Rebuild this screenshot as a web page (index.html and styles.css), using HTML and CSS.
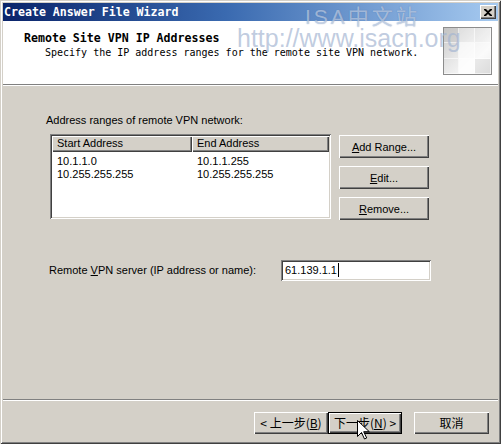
FILE: index.html
```html
<!DOCTYPE html>
<html>
<head>
<meta charset="utf-8">
<title>Create Answer File Wizard</title>
<link rel="stylesheet" href="styles.css">
</head>
<body>
<div class="window">
  <div class="titlebar">
    <span class="title-text">Create Answer File Wizard</span>
    <button class="close-btn" aria-label="Close">
      <svg width="8" height="7" viewBox="0 0 8 7"><path d="M0 0h2l2 2 2-2h2v1L5 3.5 8 6v1H6L4 5 2 7H0V6l3-2.5L0 1z" fill="#000"/></svg>
    </button>
  </div>

  <div class="header">
    <div class="header-text">
      <div class="header-title">Remote Site VPN IP Addresses</div>
      <div class="header-sub">Specify the IP address ranges for the remote site VPN network.</div>
    </div>
    <div class="header-art">
      <div class="art-cell a1"></div><div class="art-cell a2"></div><div class="art-cell a3"></div>
      <div class="art-cell a4"></div><div class="art-cell a5"></div><div class="art-cell a6"></div>
      <div class="art-cell a7"></div><div class="art-cell a8"></div><div class="art-cell a9"></div>
    </div>
  </div>

  <div class="etched"></div>

  <div class="body">
    <div class="label">Address ranges of remote VPN network:</div>
    <div class="range-row">
      <div class="listview">
        <div class="lv-head">
          <div class="lv-col c1">Start Address</div>
          <div class="lv-col c2">End Address</div>
        </div>
        <div class="lv-rows">
          <div class="lv-row"><span class="c1">10.1.1.0</span><span class="c2">10.1.1.255</span></div>
          <div class="lv-row"><span class="c1">10.255.255.255</span><span class="c2">10.255.255.255</span></div>
        </div>
      </div>
      <div class="side-buttons">
        <button class="btn side"><u>A</u>dd Range...</button>
        <button class="btn side"><u>E</u>dit...</button>
        <button class="btn side"><u>R</u>emove...</button>
      </div>
    </div>

    <div class="server-row">
      <label class="server-label">Remote <u>V</u>PN server (IP address or name):</label>
      <div class="textbox">61.139.1.1<span class="caret"></span></div>
    </div>
  </div>

  <div class="etched"></div>

  <div class="footer">
    <button class="btn nav">&lt;&nbsp;上一步(<u>B</u>)</button>
    <button class="btn nav default">下一步(<u>N</u>)&nbsp;&gt;</button>
    <button class="btn nav cancel">取消</button>
  </div>

  <!-- site watermark stamped over the dialog -->
  <span class="brand-mark">ISA中文站</span>
  <span class="brand-url">http://www.isacn.org</span>

  <svg class="pointer" width="13" height="20" viewBox="0 0 13 20">
    <path d="M0.5 0.5v16l4-4 3 6.5 2.2-1-3-6.3h5.6z" fill="#fff" stroke="#000" stroke-width="1"/>
  </svg>
</div>
</body>
</html>
```

FILE: styles.css
```css
* { box-sizing: border-box; }

html, body {
  margin: 0;
  padding: 0;
  background: #d4d0c8;
}

body {
  font-family: "Liberation Sans", Arial, sans-serif;
  font-size: 11px;
  color: #000;
}

u { text-decoration: underline; text-underline-offset: 1px; }

.window {
  position: relative;
  width: 501px;
  height: 444px;
  background: #d4d0c8;
  display: flex;
  flex-direction: column;
  padding: 3px;
  box-shadow:
    inset 1px 1px 0 #d4d0c8,
    inset -1px -1px 0 #404040,
    inset 2px 2px 0 #ffffff,
    inset -2px -2px 0 #808080;
}

/* caption */
.titlebar {
  height: 18px;
  flex: none;
  display: flex;
  align-items: center;
  padding: 0 2px 0 1px;
  background: linear-gradient(to right, #0a246a 0%, #3a6ab0 45%, #a6caf0 100%);
}

.title-text {
  font-family: "DejaVu Sans Mono", "Liberation Mono", monospace;
  font-weight: bold;
  font-size: 11.6px;
  color: #fff;
  flex: 1;
  white-space: nowrap;
}

.close-btn {
  width: 16px;
  height: 14px;
  padding: 0;
  margin: 0;
  border: none;
  background: #d4d0c8;
  display: flex;
  align-items: center;
  justify-content: center;
  box-shadow:
    inset 1px 1px 0 #ffffff,
    inset -1px -1px 0 #404040,
    inset -2px -2px 0 #808080;
}

/* wizard header */
.header {
  height: 63px;
  flex: none;
  background: #fff;
  display: flex;
  justify-content: space-between;
  padding: 10px 5px 0 21px;
}

.header-title {
  font-family: "DejaVu Sans Mono", "Liberation Mono", monospace;
  font-weight: bold;
  font-size: 11.6px;
  line-height: 14px;
}

.header-sub {
  font-family: "DejaVu Sans Mono", "Liberation Mono", monospace;
  font-size: 10px;
  line-height: 12px;
  margin-top: 2px;
  padding-left: 21px;
}

.header-art {
  width: 49px;
  height: 48px;
  margin-top: -4px;
  margin-right: 1px;
  border: 1px solid #8c8c8c;
  display: grid;
  grid-template-columns: 15px 16px 16px;
  grid-template-rows: 15px 16px 15px;
  background: linear-gradient(135deg, #c8c8c8 0%, #e8e8e8 45%, #f6f6f6 70%, #dcdcdc 100%);
}

.art-cell { border-right: 1px solid rgba(255,255,255,0.6); border-bottom: 1px solid rgba(255,255,255,0.6); }
.a1 { background: rgba(190,190,190,0.35); }
.a2 { background: rgba(255,255,255,0.25); }
.a3 { background: rgba(255,255,255,0.15); }
.a5 { background: rgba(255,255,255,0.7); }
.a6 { background: rgba(255,255,255,0.5); }
.a8 { background: rgba(255,255,255,0.8); }
.a9 { background: rgba(220,220,220,0.5); }

/* etched separator */
.etched {
  flex: none;
  height: 2px;
  border-top: 1px solid #808080;
  border-bottom: 1px solid #ffffff;
}

/* page body */
.body {
  flex: 1;
  padding: 28px 0 0 43px;
}

.label {
  line-height: 13px;
}

.range-row {
  display: flex;
  gap: 8px;
  margin-top: 7px;
  margin-left: 4px;
}

.listview {
  width: 281px;
  height: 85px;
  background: #fff;
  padding: 2px;
  box-shadow:
    inset 1px 1px 0 #808080,
    inset -1px -1px 0 #ffffff,
    inset 2px 2px 0 #404040,
    inset -2px -2px 0 #d4d0c8;
}

.lv-head {
  display: flex;
  height: 16px;
}

.lv-col {
  background: #d4d0c8;
  line-height: 15px;
  padding-left: 5px;
  box-shadow:
    inset 1px 1px 0 #ffffff,
    inset -1px -1px 0 #404040,
    inset -2px -2px 0 #808080;
}

.lv-col.c1 { width: 140px; }
.lv-col.c2 { width: 137px; }

.lv-rows { padding-top: 3px; }

.lv-row {
  display: flex;
  line-height: 13px;
}

.lv-row .c1 { width: 140px; padding-left: 5px; }
.lv-row .c2 { padding-left: 5px; }

.side-buttons {
  display: flex;
  flex-direction: column;
  gap: 8px;
  padding-top: 1px;
}

.btn {
  font-family: "Liberation Sans", Arial, sans-serif;
  font-size: 11px;
  color: #000;
  background: #d4d0c8;
  border: none;
  padding: 0;
  margin: 0;
  box-shadow:
    inset 1px 1px 0 #ffffff,
    inset -1px -1px 0 #404040,
    inset -2px -2px 0 #808080;
}

.btn.side {
  width: 90px;
  height: 23px;
}

.server-row {
  display: flex;
  align-items: center;
  margin-top: 40px;
  margin-left: 3px;
}

.server-label {
  width: 232px;
  line-height: 13px;
}

.textbox {
  width: 150px;
  height: 21px;
  background: #fff;
  padding: 4px 0 0 4px;
  line-height: 13px;
  display: flex;
  align-items: flex-start;
  box-shadow:
    inset 1px 1px 0 #808080,
    inset -1px -1px 0 #ffffff,
    inset 2px 2px 0 #404040,
    inset -2px -2px 0 #d4d0c8;
}

.caret {
  display: inline-block;
  width: 1px;
  height: 14px;
  margin-left: 1px;
  margin-top: -1px;
  background: #000;
}

/* navigation buttons */
.footer {
  height: 40px;
  flex: none;
  display: flex;
  justify-content: flex-end;
  align-items: flex-start;
  padding: 11px 9px 0 0;
}

.btn.nav {
  width: 74px;
  height: 22px;
  font-family: "Noto Sans CJK SC", "Liberation Sans", sans-serif;
  font-size: 12px;
  line-height: 14px;
}

.btn.nav.default {
  box-shadow:
    inset 0 0 0 1px #000,
    inset 2px 2px 0 #ffffff,
    inset -2px -2px 0 #404040,
    inset -3px -3px 0 #808080;
}

.btn.nav.cancel {
  width: 75px;
  margin-left: 12px;
}

/* watermark */
.brand-mark {
  position: absolute;
  left: 305px;
  top: 0;
  font-family: "Liberation Sans", "Noto Sans CJK SC", sans-serif;
  font-size: 21px;
  line-height: normal;
  letter-spacing: 3px;
  color: rgba(225, 235, 250, 0.55);
  text-shadow: 0 0 1px rgba(70, 100, 150, 0.6);
  white-space: nowrap;
  pointer-events: none;
}

.brand-url {
  position: absolute;
  left: 237px;
  top: 24px;
  font-family: "Liberation Sans", Arial, sans-serif;
  font-size: 25px;
  line-height: 28px;
  color: rgba(165, 182, 210, 0.7);
  white-space: nowrap;
  pointer-events: none;
}

.pointer {
  position: absolute;
  left: 357px;
  top: 420px;
}
```
